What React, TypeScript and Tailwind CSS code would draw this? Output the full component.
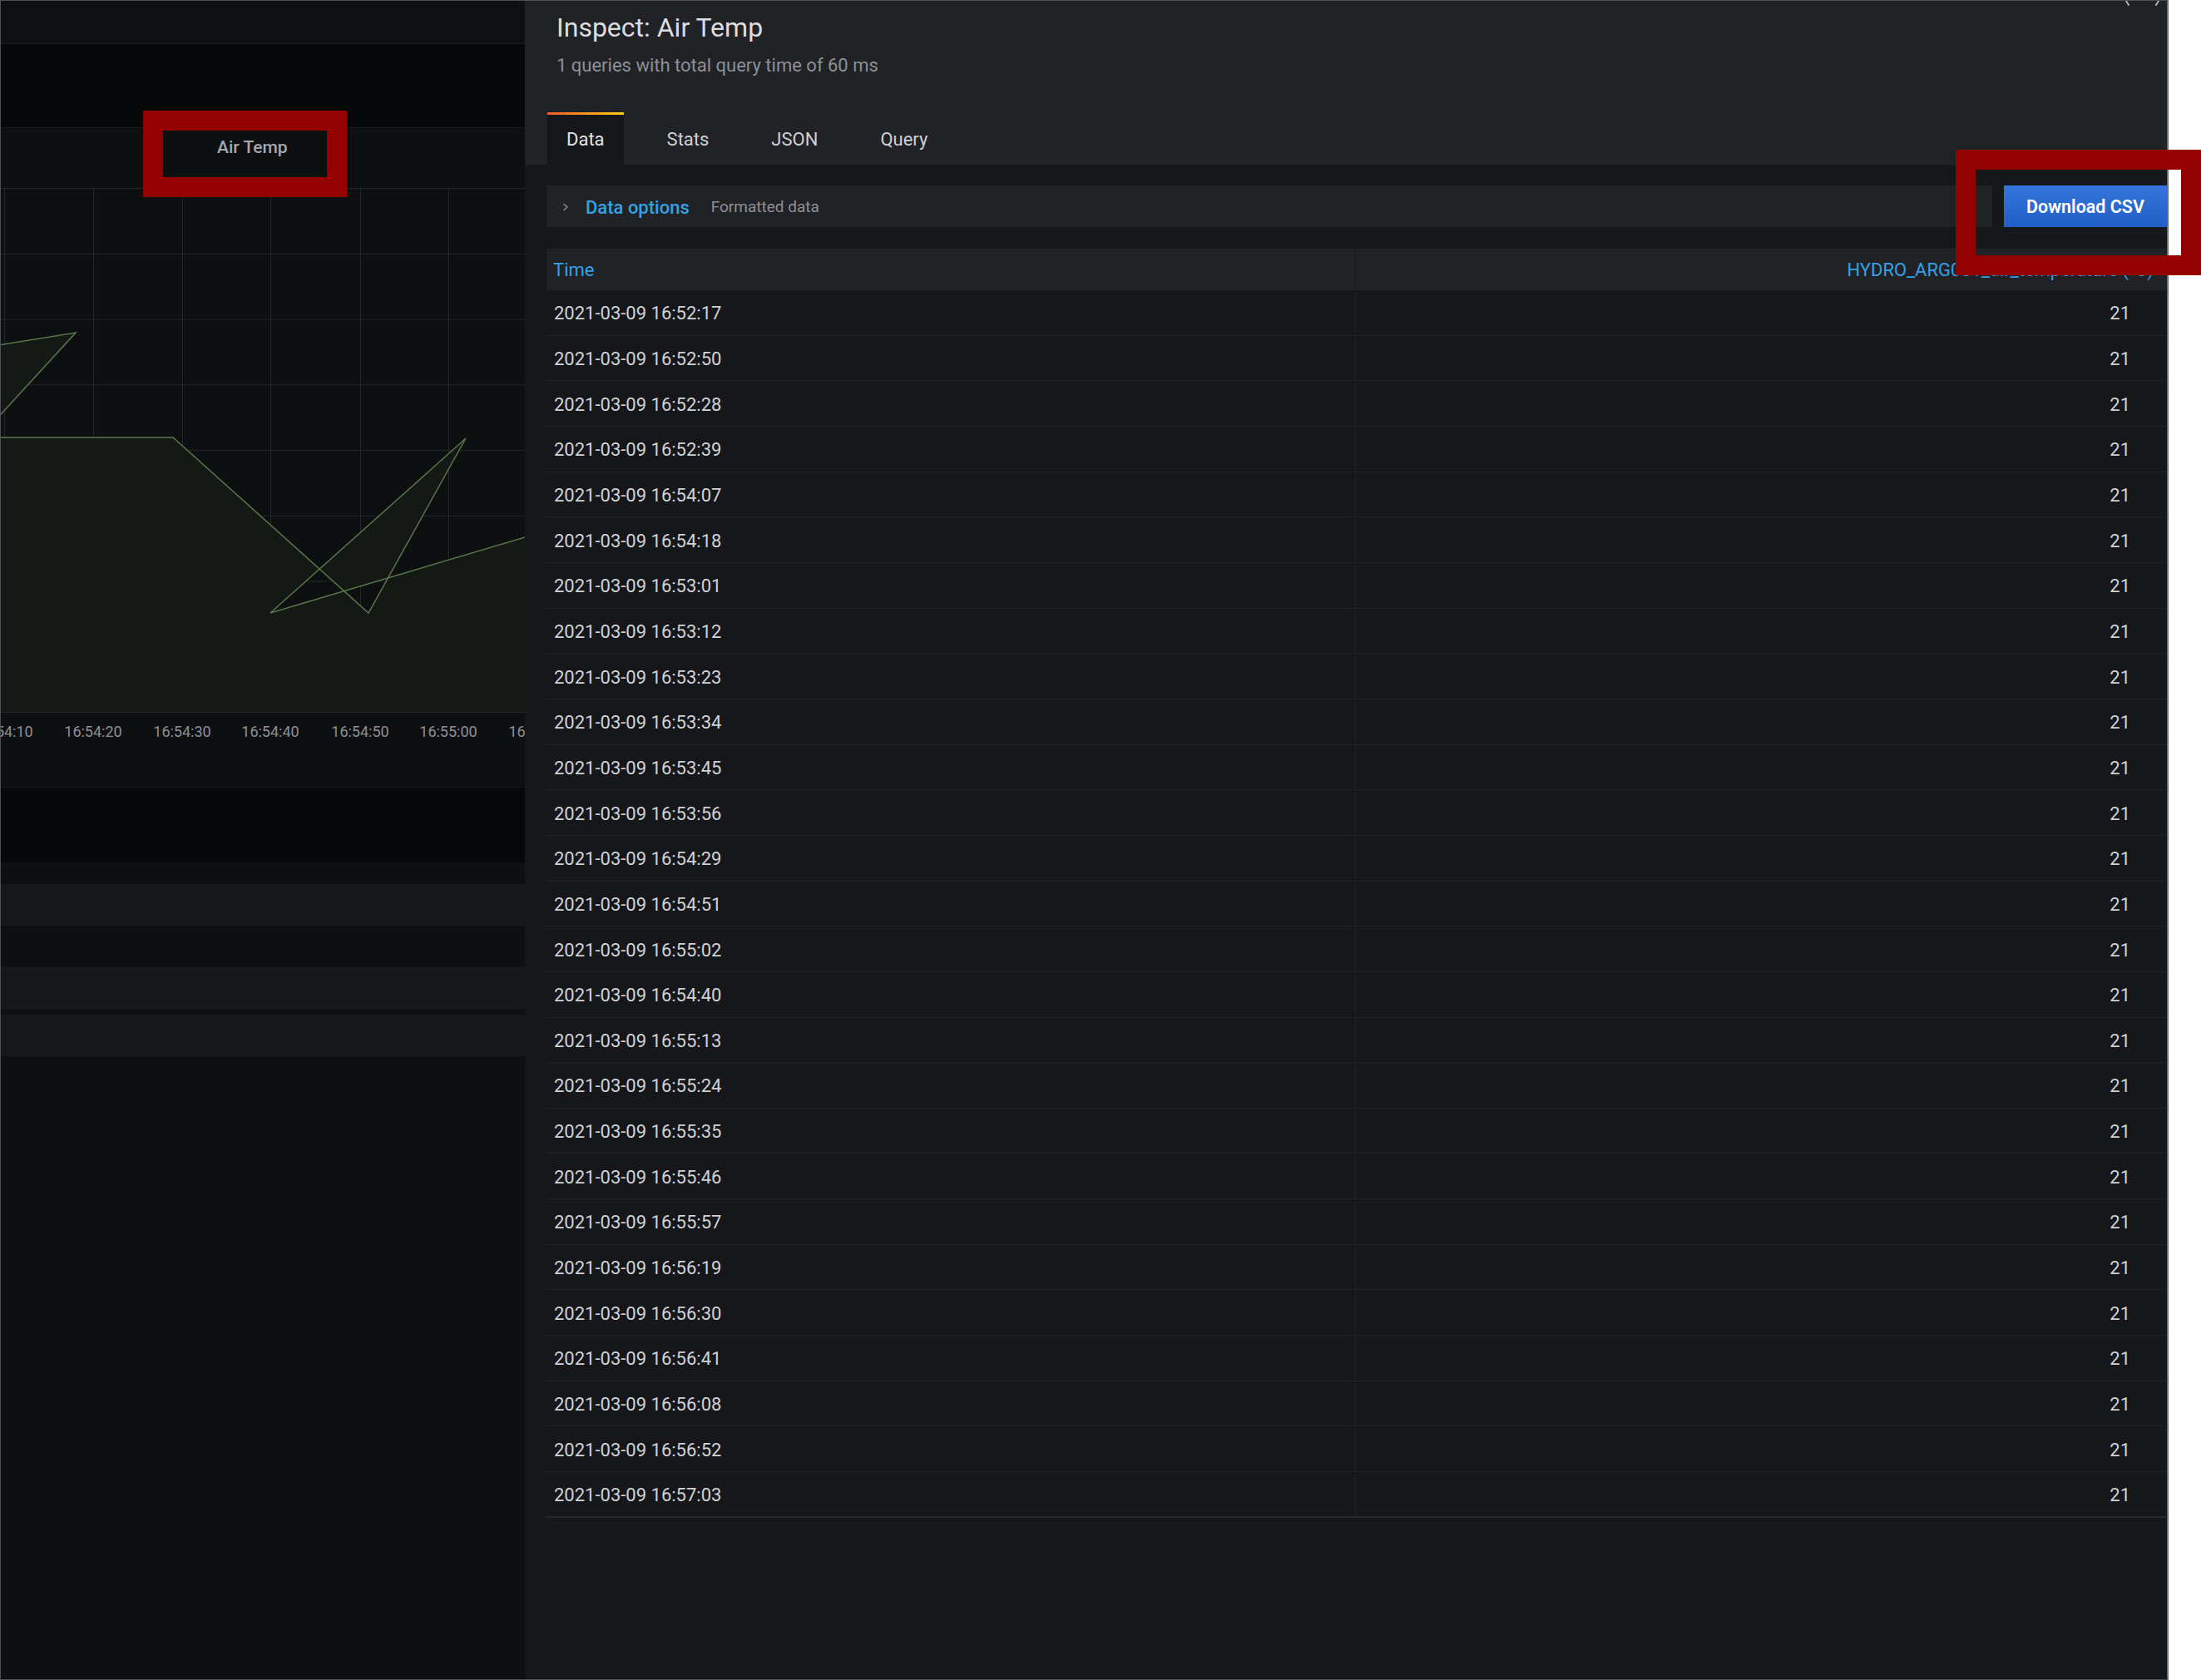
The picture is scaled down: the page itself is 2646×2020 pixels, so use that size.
import React from "react";

const rows = [
  "2021-03-09 16:52:17",
  "2021-03-09 16:52:50",
  "2021-03-09 16:52:28",
  "2021-03-09 16:52:39",
  "2021-03-09 16:54:07",
  "2021-03-09 16:54:18",
  "2021-03-09 16:53:01",
  "2021-03-09 16:53:12",
  "2021-03-09 16:53:23",
  "2021-03-09 16:53:34",
  "2021-03-09 16:53:45",
  "2021-03-09 16:53:56",
  "2021-03-09 16:54:29",
  "2021-03-09 16:54:51",
  "2021-03-09 16:55:02",
  "2021-03-09 16:54:40",
  "2021-03-09 16:55:13",
  "2021-03-09 16:55:24",
  "2021-03-09 16:55:35",
  "2021-03-09 16:55:46",
  "2021-03-09 16:55:57",
  "2021-03-09 16:56:19",
  "2021-03-09 16:56:30",
  "2021-03-09 16:56:41",
  "2021-03-09 16:56:08",
  "2021-03-09 16:56:52",
  "2021-03-09 16:57:03",
];

const hLines = [0, 78.75, 157.5, 236.25, 315, 393.75, 472.5, 551.25, 630];
const vLines = [4, 111, 218, 324, 432, 538];
const labels: [number, string][] = [
  [4, "16:54:10"],
  [111, "16:54:20"],
  [218, "16:54:30"],
  [324, "16:54:40"],
  [432, "16:54:50"],
  [538, "16:55:00"],
];

function Chart() {
  return (
    <svg width="630" height="720" className="block">
      {hLines.map((y) => (
        <line key={"h" + y} x1="0" x2="630" y1={y + 0.5} y2={y + 0.5} stroke="#252629" strokeWidth="1" />
      ))}
      {vLines.map((x) => (
        <line key={"v" + x} x1={x + 0.5} x2={x + 0.5} y1="0" y2="630" stroke="#252629" strokeWidth="1" />
      ))}
      <polygon points="0,188 90,174 0,270" fill="#151915" />
      <polyline points="-10,190 90,174 -10,283" fill="none" stroke="#58784b" strokeWidth="1.5" />
      <polygon
        points="0,300 207,300 442,511 559,301 324,511 631,420 631,630 0,630"
        fill="#151915"
        fillRule="evenodd"
      />
      <polyline
        points="-10,300 207,300 442,511 559,301 324,511 640,417"
        fill="none"
        stroke="#58784b"
        strokeWidth="1.5"
      />
      {labels.map(([x, t]) => (
        <text
          key={t}
          x={x}
          y="660"
          textAnchor="middle"
          fontSize="18"
          fill="#8c8f95"
          fontFamily="Roboto, sans-serif"
        >
          {t}
        </text>
      ))}
      <text x="610.5" y="660" fontSize="18" fill="#8c8f95" fontFamily="Roboto, sans-serif">
        16:55
      </text>
    </svg>
  );
}

function LeftPanel() {
  return (
    <div className="w-[630px] shrink-0 h-full flex flex-col bg-[#0e0f11] overflow-hidden">
      <div className="h-[52px] shrink-0 bg-[#0f1012] border-b border-[#1c1d20]" />
      <div className="h-[101px] shrink-0 bg-[#060709] border-b border-[#1c1d20]" />
      <div className="h-[793px] shrink-0 flex flex-col bg-[#0e0f11] border-b border-[#18191c]">
        <div className="h-[72px] shrink-0 pt-[11px] pl-[260px]">
          <div className="text-[21px] leading-[24px] font-medium text-[#a4a9b1]">Air Temp</div>
        </div>
        <Chart />
      </div>
      <div className="h-[90px] shrink-0 bg-[#07080a]" />
      <div className="h-[26px] shrink-0 bg-[#0e0f11]" />
      <div className="h-[50px] shrink-0 bg-[#17181c]" />
      <div className="h-[50px] shrink-0 bg-[#0e0f11]" />
      <div className="h-[50px] shrink-0 bg-[#17181c]" />
      <div className="h-[7px] shrink-0 bg-[#0f1012]" />
      <div className="h-[50px] shrink-0 bg-[#17181c]" />
      <div className="flex-1 bg-[#0e0f11]" />
    </div>
  );
}

function Tab({ label, active }: { label: string; active?: boolean }) {
  return (
    <div className={active ? "h-[63px] flex flex-col bg-[#16171b]" : "h-[63px] flex flex-col"}>
      <div
        className={
          active
            ? "h-[3px] bg-gradient-to-r from-[#f05a28] to-[#fbca0a]"
            : "h-[3px]"
        }
      />
      <div
        className={
          active
            ? "flex-1 flex items-center pb-[2px] px-[23px] text-[22px] text-[#e3e4e6]"
            : "flex-1 flex items-center pb-[2px] px-[23px] text-[22px] text-[#cdd0d4]"
        }
      >
        {label}
      </div>
    </div>
  );
}

function Drawer() {
  return (
    <div className="relative flex-1 h-full flex flex-col bg-[#16171b] overflow-hidden">
      <svg width="60" height="8" className="absolute right-[2px] top-0">
        <path d="M13 0 L16 5" fill="none" stroke="#aeb1b6" strokeWidth="2" strokeLinecap="round" />
        <path d="M52 0 L49 5" fill="none" stroke="#aeb1b6" strokeWidth="2" strokeLinecap="round" />
      </svg>
      <div className="h-[197px] shrink-0 bg-[#212226] flex flex-col">
        <div className="pl-[38px] pt-[13px]">
          <div className="text-[32px] leading-[38px] text-[#dcdde0]">Inspect: Air Temp</div>
          <div className="mt-[14px] text-[22px] leading-[26px] text-[#8d9096]">
            1 queries with total query time of 60 ms
          </div>
        </div>
        <div className="mt-[43px] pl-[27px] flex gap-[29px]">
          <Tab label="Data" active />
          <Tab label="Stats" />
          <Tab label="JSON" />
          <Tab label="Query" />
        </div>
      </div>
      <div className="pl-[26px] pt-[25px] flex flex-col">
        <div className="flex h-[50px] gap-[14px]">
          <div className="flex-1 bg-[#212226] flex items-center pl-[18px] pt-[2px]">
            <svg width="10" height="14" viewBox="0 0 10 14" className="shrink-0">
              <path d="M3 3.5l4 3.5-4 3.5" fill="none" stroke="#8a8d93" strokeWidth="1.6" strokeLinecap="round" strokeLinejoin="round" />
            </svg>
            <span className="ml-[19px] text-[22px] font-medium text-[#33a2e5]">Data options</span>
            <span className="ml-[26px] text-[19px] text-[#8d9096]">Formatted data</span>
          </div>
          <div className="w-[196px] shrink-0 flex items-center justify-center pt-[2px] bg-gradient-to-b from-[#3476dc] to-[#1f5fc6] text-white text-[21.5px] font-semibold">
            Download CSV
          </div>
        </div>
        <div className="mt-[26px] flex flex-col">
          <div className="flex h-[50px] bg-[#212226] text-[22px] text-[#33a2e5]">
            <div className="w-[973px] shrink-0 flex items-center pl-[8px] border-r border-[#18191d]">Time</div>
            <div className="flex-1 flex items-center justify-end pr-[16px] whitespace-nowrap">
              HYDRO_ARG001_air_temperature (°C)
            </div>
          </div>
          {rows.map((r, i) => (
            <div
              key={i}
              className={
                i === rows.length - 1
                  ? "flex h-[54.67px] pt-[2px] border-b-2 border-[#25272b] text-[22px] text-[#d0d2d6]"
                  : "flex h-[54.67px] pt-[2px] border-b border-[#212226] text-[22px] text-[#d0d2d6]"
              }
            >
              <div className="w-[973px] shrink-0 flex items-center pl-[9px] border-r border-[#1f2024]">{r}</div>
              <div className="flex-1 flex items-center justify-end pr-[44px]">21</div>
            </div>
          ))}
        </div>
      </div>
    </div>
  );
}

export default function App() {
  return (
    <div className="relative w-[2646px] h-[2020px] bg-white overflow-hidden font-['Roboto',sans-serif]">
      <div className="flex w-[2607px] h-[2020px] border border-[#4d4f52] border-r-2 border-r-[#6b6c6e]">
        <LeftPanel />
        <Drawer />
      </div>
      <div className="absolute left-[172px] top-[133px] w-[245px] h-[104px] border-[24px] border-[#950000]" />
      <div className="absolute left-[2351px] top-[180px] w-[295px] h-[151px] border-[24px] border-[#950000]" />
    </div>
  );
}
